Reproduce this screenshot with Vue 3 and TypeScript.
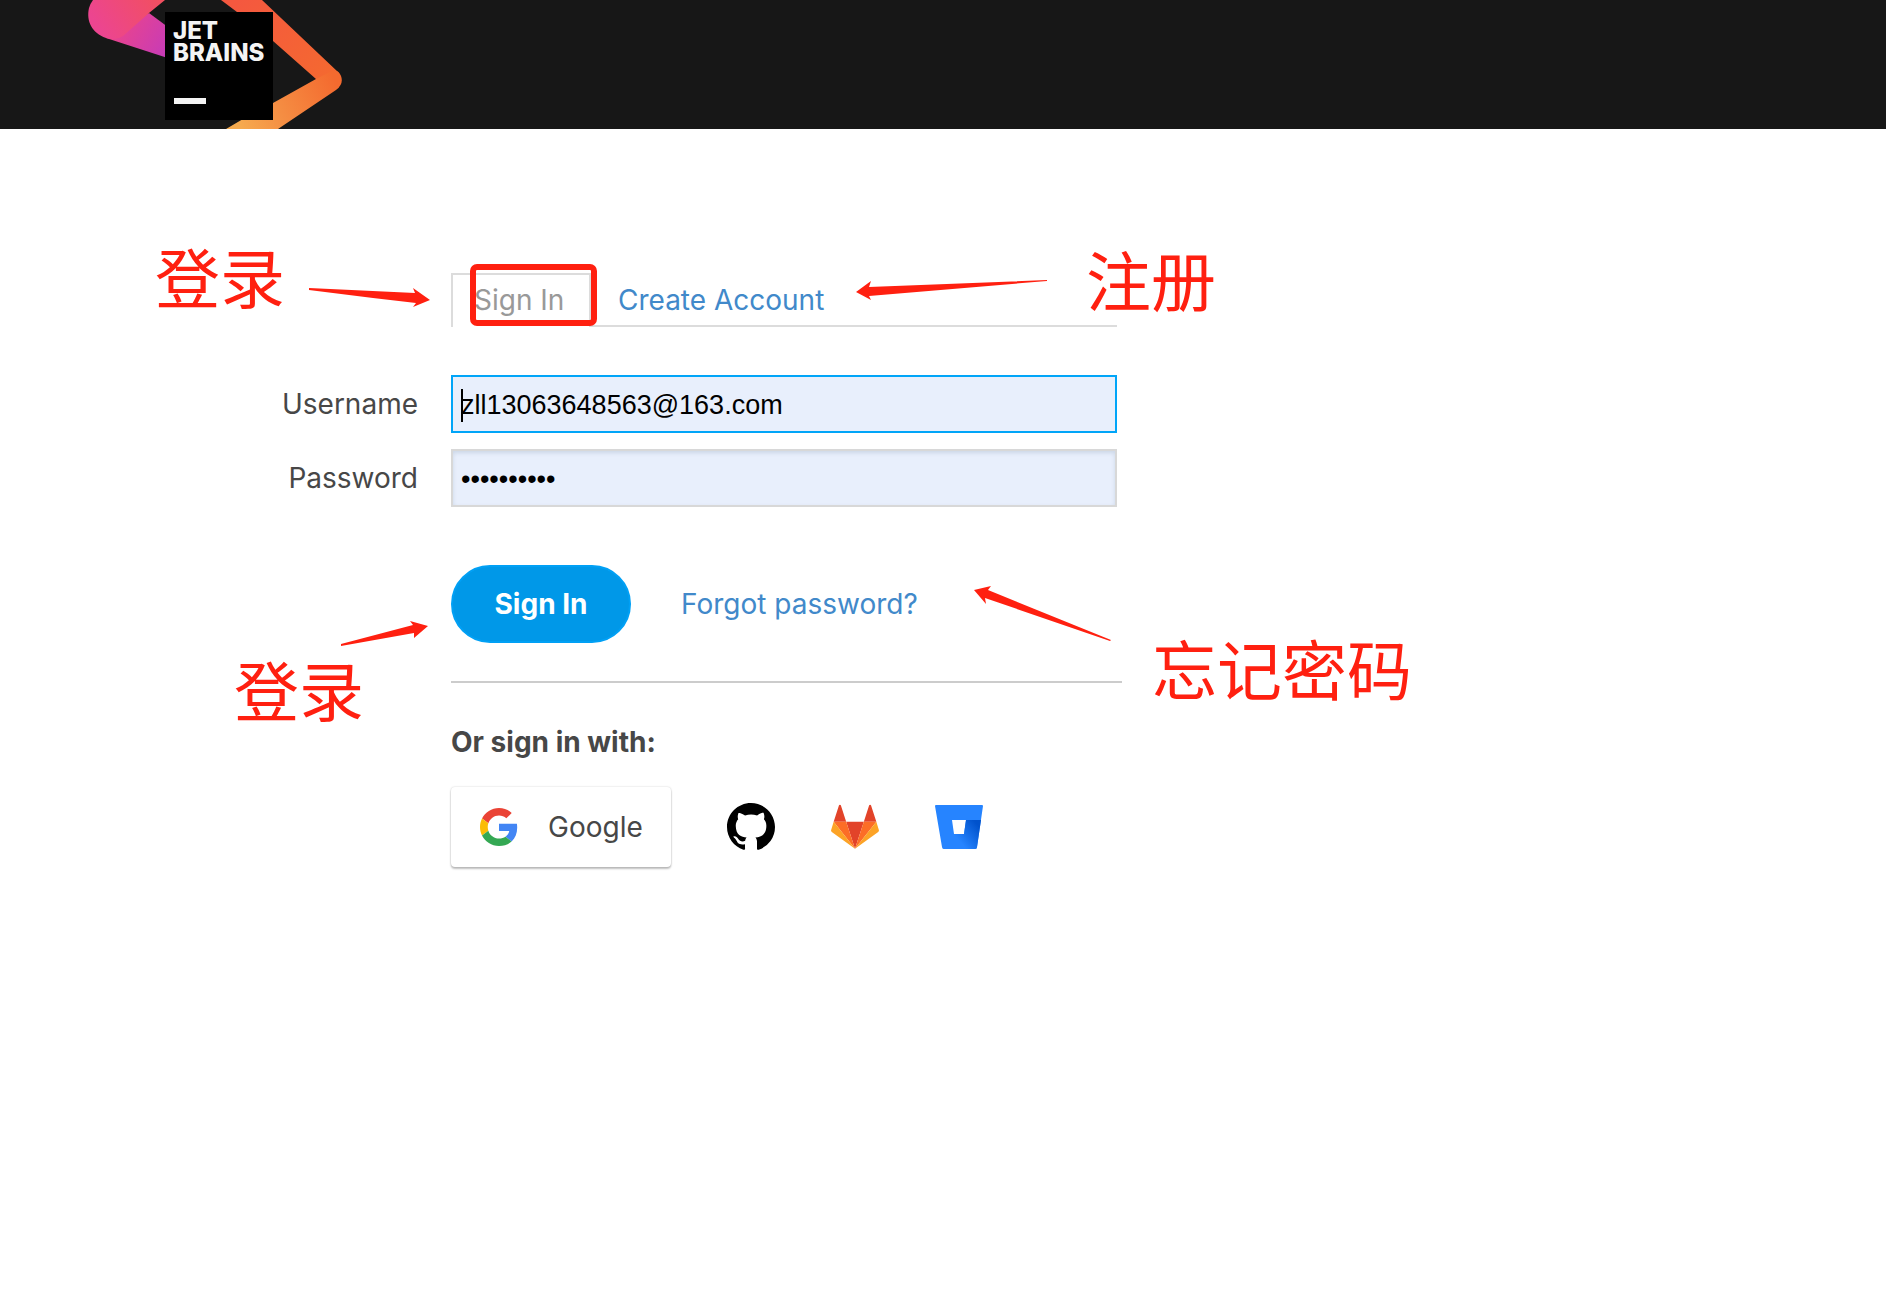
<script setup lang="ts">
import { ref } from 'vue'

interface Note {
  text: string
  slot: string
}

const username = ref<string>('zll13063648563@163.com')
const password = ref<string>('abcdefghij')

const notes: Note[] = [
  { text: '登录', slot: 'note-tab' },
  { text: '注册', slot: 'note-register' },
  { text: '登录', slot: 'note-submit' },
  { text: '忘记密码', slot: 'note-forgot' },
]

const arrows: string[] = [
  '309,288 415,293 413,288 430,300 413,307 416,303 373,298 309,290',
  '856,292 871,281 869,287 1047,280 1047,281 869,296 871,300',
  '341,644 413,625 410,621 428,626 414,638 414,633 341,646',
  '974,590 991,586 988,590 1111,640 1110,641 985,598 986,604',
]
</script>

<template>
  <div class="page">
    <header class="top">
      <svg class="ribbon" width="400" height="129" viewBox="0 0 400 129" aria-hidden="true">
        <defs>
          <linearGradient id="purple" gradientUnits="userSpaceOnUse" x1="120" y1="20" x2="170" y2="50">
            <stop offset="0" stop-color="#ea448c" />
            <stop offset="1" stop-color="#c63bb8" />
          </linearGradient>
          <linearGradient id="pink" gradientUnits="userSpaceOnUse" x1="100" y1="30" x2="160" y2="-10">
            <stop offset="0" stop-color="#ec4590" />
            <stop offset="1" stop-color="#f2505c" />
          </linearGradient>
          <linearGradient id="orange" gradientUnits="userSpaceOnUse" x1="240" y1="0" x2="335" y2="85">
            <stop offset="0" stop-color="#f4583f" />
            <stop offset="1" stop-color="#f46a2f" />
          </linearGradient>
          <linearGradient id="amber" gradientUnits="userSpaceOnUse" x1="335" y1="80" x2="240" y2="129">
            <stop offset="0" stop-color="#f46a2f" />
            <stop offset="0.6" stop-color="#f58e43" />
            <stop offset="1" stop-color="#f6ab4f" />
          </linearGradient>
        </defs>
        <path d="M149 13 L180 36 V62 L106 38 Z" fill="url(#purple)" />
        <path d="M93 0 H165 L149 13 L123 36 Q116 41 106 38 C92 33 86 21 89 8 Q90 4 93 0 Z" fill="url(#pink)" />
        <path d="M221 0 H262 L338 72 Q344 80 338 88 L316 79 L273 41 L237 12 Z" fill="url(#orange)" />
        <path d="M316 79 L330 72 Q338 68 341 76 Q344 84 336 90 L278 129 H226 L243 119 L273 103 Z" fill="url(#amber)" />
      </svg>
      <a class="brand" href="#" aria-label="JetBrains">
        <span>JET<br />BRAINS</span>
        <i class="brand-bar"></i>
      </a>
    </header>

    <main>
      <form class="login" @submit.prevent>
        <nav class="tabs field">
          <a class="tab active" href="#">Sign In</a>
          <a class="tab" href="#">Create Account</a>
        </nav>

        <label for="username">Username</label>
        <div class="field user">
          <input id="username" v-model="username" class="focused" type="text" autocomplete="off" />
          <span class="caret"></span>
        </div>
        <label for="password">Password</label>
        <div class="field pass">
          <input id="password" v-model="password" type="password" autocomplete="off" />
        </div>

        <div class="actions">
          <button class="submit" type="submit">Sign In</button>
          <a href="#">Forgot password?</a>
        </div>

        <section class="social">
          <h2>Or sign in with:</h2>
          <div class="providers">
            <button class="google" type="button">
              <svg width="38" height="38" viewBox="0 0 48 48" aria-hidden="true">
                <path fill="#EA4335" d="M24 9.5c3.54 0 6.71 1.22 9.21 3.6l6.85-6.85C35.9 2.38 30.47 0 24 0 14.62 0 6.51 5.38 2.56 13.22l7.98 6.19C12.43 13.72 17.74 9.5 24 9.5z" />
                <path fill="#4285F4" d="M46.98 24.55c0-1.57-.15-3.09-.38-4.55H24v9.02h12.94c-.58 2.96-2.26 5.48-4.78 7.18l7.73 6c4.51-4.18 7.09-10.36 7.09-17.65z" />
                <path fill="#FBBC05" d="M10.53 28.59c-.48-1.45-.76-2.99-.76-4.59s.27-3.14.76-4.59l-7.98-6.19C.92 16.46 0 20.12 0 24c0 3.88.92 7.54 2.56 10.78l7.97-6.19z" />
                <path fill="#34A853" d="M24 48c6.48 0 11.93-2.13 15.89-5.81l-7.73-6c-2.15 1.45-4.92 2.3-8.16 2.3-6.26 0-11.57-4.22-13.47-9.91l-7.98 6.19C6.51 42.62 14.62 48 24 48z" />
              </svg>
              <span>Google</span>
            </button>
            <button class="icon" type="button" aria-label="GitHub">
              <svg width="48" height="48" viewBox="0 0 16 16" aria-hidden="true">
                <path d="M8 0C3.58 0 0 3.58 0 8c0 3.54 2.29 6.53 5.47 7.59.4.07.55-.17.55-.38 0-.19-.01-.82-.01-1.49-2.01.37-2.53-.49-2.69-.94-.09-.23-.48-.94-.82-1.13-.28-.15-.68-.52-.01-.53.63-.01 1.08.58 1.23.82.72 1.21 1.87.87 2.33.66.07-.52.28-.87.51-1.07-1.78-.2-3.64-.89-3.64-3.95 0-.87.31-1.59.82-2.15-.08-.2-.36-1.02.08-2.12 0 0 .67-.21 2.2.82.64-.18 1.32-.27 2-.27s1.36.09 2 .27c1.53-1.04 2.2-.82 2.2-.82.44 1.1.16 1.92.08 2.12.51.56.82 1.27.82 2.15 0 3.07-1.87 3.75-3.65 3.95.29.25.54.73.54 1.48 0 1.07-.01 1.93-.01 2.2 0 .21.15.46.55.38A8.01 8.01 0 0 0 16 8c0-4.42-3.58-8-8-8z" />
              </svg>
            </button>
            <button class="icon" type="button" aria-label="GitLab">
              <svg width="48" height="48" viewBox="0 0 36 36" aria-hidden="true">
                <path fill="#e24329" d="M2 14l9.38 0-4-12.28c-.2-.63-1.18-.63-1.38 0zM34 14h-9.38l4-12.28c.2-.63 1.18-.63 1.38 0zM18 34.38L11.38 14h13.24z" />
                <path fill="#fc6d26" d="M18 34.38L11.38 14H2zM18 34.38L24.62 14H34z" />
                <path fill="#fca326" d="M2 14L.1 20.16c-.18.56 0 1.2.5 1.56L18 34.38zM34 14l1.9 6.16c.18.56 0 1.2-.5 1.56L18 34.38z" />
              </svg>
            </button>
            <button class="icon" type="button" aria-label="Bitbucket">
              <svg width="48" height="44" viewBox="0 0 48 44" aria-hidden="true">
                <defs>
                  <linearGradient id="bucket" gradientUnits="userSpaceOnUse" x1="45" y1="16" x2="23" y2="34">
                    <stop offset="0.15" stop-color="#0052cc" />
                    <stop offset="1" stop-color="#2684ff" />
                  </linearGradient>
                </defs>
                <path fill="#2684ff" fill-rule="evenodd" d="M1 0H47Q48 0 48 1L42 42Q42 44 40 44H9Q7 44 7 42L0 1Q0 0 1 0ZM17 15L19 29H29L31 15Z" />
                <path fill="url(#bucket)" d="M31 15H46L42 42Q42 44 40 44H9L8 43L19 29H29Z" />
              </svg>
            </button>
          </div>
        </section>
      </form>
    </main>

    <svg class="arrows" width="1200" height="700" viewBox="0 0 1200 700" aria-hidden="true">
      <polygon v-for="points in arrows" :key="points" :points="points" />
    </svg>
    <span class="highlight"></span>
    <span v-for="note in notes" :key="note.slot" class="note" :class="note.slot">{{ note.text }}</span>
  </div>
</template>

<style>
body {
  margin: 0;
  background: #fff;
}
</style>

<style scoped>
.page {
  position: relative;
  min-height: 100vh;
  overflow: hidden;
  font-family: Inter, "Liberation Sans", sans-serif;
  font-size: 28px;
  line-height: 34px;
  color: #474747;
}

a {
  color: #4189ca;
  text-decoration: none;
}

button {
  font: inherit;
  color: inherit;
  border: 0;
  cursor: pointer;
}

.top {
  position: relative;
  height: 129px;
  box-sizing: border-box;
  padding: 12px 0 0 165px;
  background: #171717;
}

.ribbon {
  position: absolute;
  left: 0;
  top: 0;
}

.brand {
  position: relative;
  display: flex;
  flex-direction: column;
  box-sizing: border-box;
  width: 108px;
  height: 108px;
  padding: 8px 8px 0;
  background: #000;
  color: #f4f4f4;
  font-size: 24px;
  font-weight: 800;
  line-height: 22px;
}

.brand-bar {
  width: 32px;
  height: 6px;
  margin: 34px 0 0 1px;
  background: #f4f4f4;
}

.login {
  display: grid;
  grid-template-columns: 418px minmax(0, 671px);
  column-gap: 33px;
  align-items: center;
  padding-top: 144px;
}

.login label {
  text-align: right;
}

.field {
  position: relative;
  margin-right: 5px;
}

.tabs {
  grid-column: 2;
  display: flex;
  height: 54px;
  margin-bottom: 48px;
}

.tab {
  flex: 1;
  box-sizing: border-box;
  padding: 10px 27px 0;
  border-bottom: 2px solid #dcdcdc;
}

.tab.active {
  flex: none;
  width: 140px;
  padding: 8px 0 0 21px;
  border: 2px solid #dcdcdc;
  border-bottom: 0;
  color: #999;
}

input {
  display: block;
  box-sizing: border-box;
  width: 100%;
  height: 58px;
  padding: 2px 8px 0;
  border: 2px solid #d8d8d8;
  border-radius: 0;
  outline: 0;
  background: #e8effc;
  box-shadow: inset 0 2px 4px #cbd6e6;
  font-family: "Liberation Sans", sans-serif;
  font-size: 27px;
  color: #000;
}

input.focused {
  border-color: #00a5f8;
  box-shadow: none;
}

.caret {
  position: absolute;
  left: 10px;
  top: 14px;
  width: 2px;
  height: 33px;
  background: #000;
}

.user,
.login label[for="username"] {
  margin-bottom: 16px;
}

.actions {
  grid-column: 2;
  display: flex;
  align-items: center;
  gap: 50px;
  margin-top: 58px;
  padding-bottom: 38px;
  border-bottom: 2px solid #ccc;
}

.submit {
  width: 180px;
  height: 78px;
  padding: 0;
  border: 2px solid #00a0f5;
  border-radius: 39px;
  background: #0098e8;
  color: #fff;
  font-weight: 700;
}

.social {
  grid-column: 2;
}

h2 {
  margin: 42px 0 28px;
  font-size: 28px;
  font-weight: 700;
  line-height: 34px;
}

.providers {
  display: flex;
  align-items: center;
  gap: 56px;
}

.google {
  display: flex;
  align-items: center;
  gap: 30px;
  width: 220px;
  height: 80px;
  padding: 0 29px;
  border-radius: 4px;
  background: #fff;
  box-shadow: 0 0 2px rgba(0, 0, 0, 0.2), 0 2px 2px rgba(0, 0, 0, 0.24);
}

.google svg {
  flex: none;
}

.icon {
  display: flex;
  padding: 0;
  background: none;
}

.arrows {
  position: absolute;
  left: 0;
  top: 0;
  fill: #ff2010;
  pointer-events: none;
}

.highlight {
  position: absolute;
  left: 470px;
  top: 264px;
  width: 115px;
  height: 50px;
  border: 6px solid #ff2010;
  border-radius: 7px;
  pointer-events: none;
}

.note {
  position: absolute;
  font-family: "Noto Sans CJK SC", sans-serif;
  font-size: 65px;
  line-height: 64px;
  color: #ff2010;
  white-space: nowrap;
  pointer-events: none;
}

.note-tab {
  left: 155px;
  top: 243px;
}

.note-register {
  left: 1086px;
  top: 246px;
}

.note-submit {
  left: 234px;
  top: 656px;
}

.note-forgot {
  left: 1152px;
  top: 635px;
}
</style>
